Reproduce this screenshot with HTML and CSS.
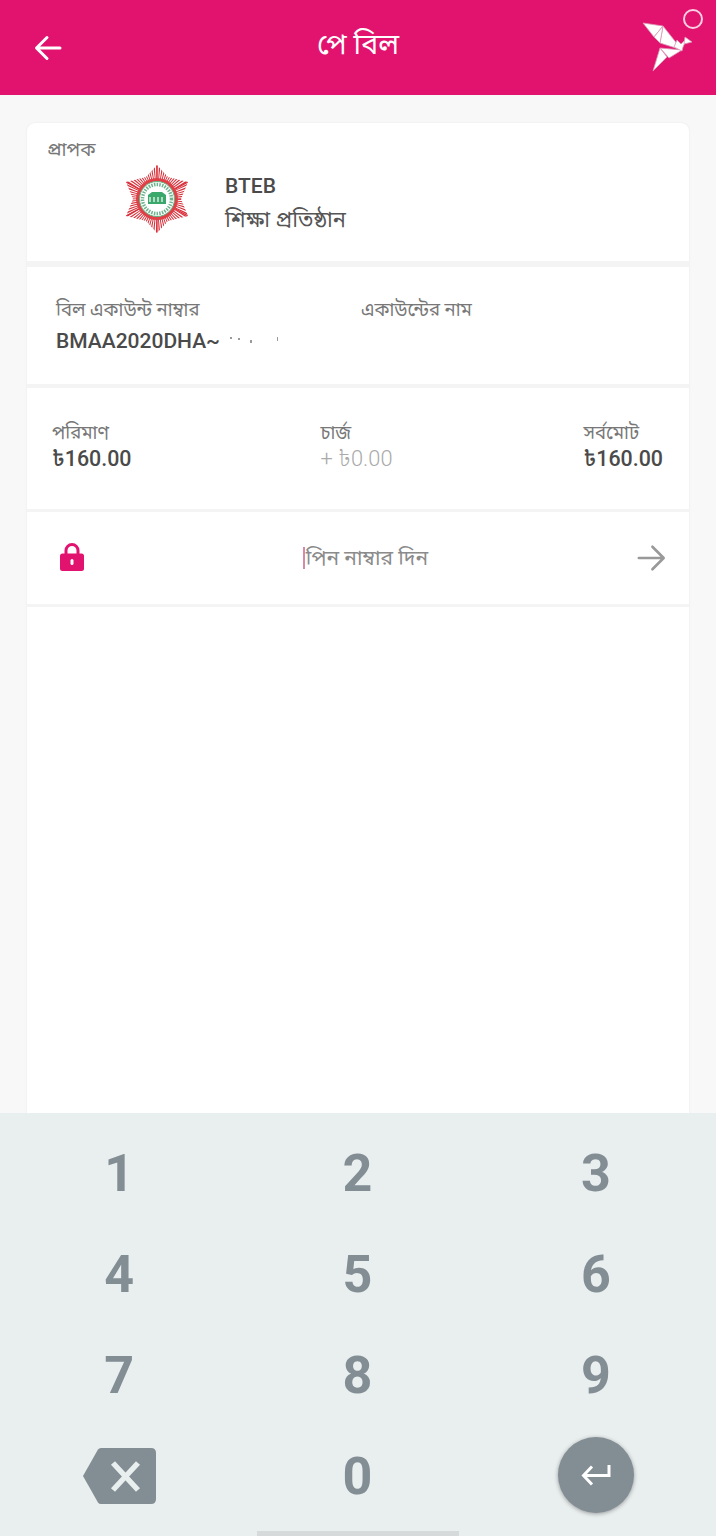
FILE: index.html
```html
<!DOCTYPE html>
<html lang="bn">
<head>
<meta charset="utf-8">
<title>পে বিল</title>
<link rel="stylesheet" href="styles.css">
</head>
<body>
<div class="screen">
  <header class="topbar">
    <svg class="back" width="32" height="32" viewBox="0 0 32 32"><path d="M28 16H5M15 5.500 4.500 16 15 26.500" fill="none" stroke="#fff" stroke-width="3" stroke-linecap="round" stroke-linejoin="round"/></svg>
    <h1 class="title">পে বিল</h1>
    <div class="brand">
      <svg width="56" height="56" viewBox="0 0 56 56">
        <g fill="#fff" stroke="#d998b5" stroke-width=".8" stroke-linejoin="round">
          <path d="M2 3 22 6 13 17Z"/>
          <path d="M22 6 41 30 19 23Z"/>
          <path d="M22 6 19 23 13 17Z"/>
          <path d="M41 30 19 28 28 38Z"/>
          <path d="M19 28 26 37 12 51Z"/>
          <path d="M36 20 40 24 46 18 42 27 41 31 33 27Z"/>
          <path d="M44 17 51 22 43 24Z"/>
        </g>
      </svg>
      <span class="ring"></span>
    </div>
  </header>

  <main class="page">
    <section class="card">
      <div class="row payee">
        <div class="small-label">প্রাপক</div>
        <div class="payee-body">
          <svg class="logo" width="66" height="68" viewBox="-33 -34 66 68">
            <defs>
              <clipPath id="star"><path d="M0-34 11-22 31-17 24 0 31 17 11 22 0 34-11 22-31 17-24 0-31-17-11-22Z"/></clipPath>
            </defs>
            <g clip-path="url(#star)">
              <circle r="30" fill="none" stroke="#d8323c" stroke-width="24" stroke-dasharray="1.300 1.300"/>
              <path d="M0-34V34M-31-17 31 17M31-17-31 17" stroke="#d8323c" stroke-width="1.200"/>
            </g>
            <circle r="21" fill="#e03f47"/>
            <circle r="17.500" fill="#fff" stroke="#5fb77f" stroke-width="1"/>
            <circle r="14.500" fill="none" stroke="#3d9a68" stroke-width="3.500" stroke-dasharray="1.500 1.200" opacity=".75"/>
            <rect x="-10" y="-8" width="20" height="14" fill="#fff"/>
            <path d="M-9-4-5-7H5L9-4V5H-9Z" fill="#3aa76b"/>
            <path d="M-7-2V3M-3-2V3M1-2V3M5-2V3" stroke="#fff" stroke-width="1.200"/>
          </svg>
          <div class="payee-text">
            <div class="payee-name">BTEB</div>
            <div class="payee-type">শিক্ষা প্রতিষ্ঠান</div>
          </div>
        </div>
      </div>
      <div class="row account">
        <div class="acc-col acc-number">
          <div class="label">বিল একাউন্ট নাম্বার</div>
          <div class="value account-value">BMAA2020DHA~<svg class="specks" width="60" height="12" viewBox="0 0 60 12"><path d="M4 2h2v2H4ZM12 3h2v2h-2ZM24 5h2v3h-2ZM51 2h1v4h-1Z" fill="#9a9a9a"/></svg></div>
        </div>
        <div class="acc-col">
          <div class="label">একাউন্টের নাম</div>
        </div>
      </div>
      <div class="row amounts">
        <div class="amt amt-left">
          <div class="label">পরিমাণ</div>
          <div class="value">৳160.00</div>
        </div>
        <div class="amt amt-mid">
          <div class="label">চার্জ</div>
          <div class="charge">+ ৳0.00</div>
        </div>
        <div class="amt amt-right">
          <div class="label">সর্বমোট</div>
          <div class="value">৳160.00</div>
        </div>
      </div>
      <div class="row pin">
        <svg class="lock" width="26" height="30" viewBox="0 0 26 30"><path d="M7 13V8.500a6 6 0 0 1 12 0V13" fill="none" stroke="#e2136e" stroke-width="3"/><rect x="1" y="11.500" width="24" height="17.500" rx="2.500" fill="#e2136e"/><rect x="11.500" y="17" width="3" height="6" rx="1.500" fill="#fff"/></svg>
        <div class="pin-field"><span class="caret"></span>পিন নাম্বার দিন</div>
        <svg class="go" width="30" height="30" viewBox="0 0 32 32"><path d="M3 16H29M17.500 4 29.500 16 17.500 28" fill="none" stroke="#999" stroke-width="2.800" stroke-linecap="round" stroke-linejoin="round"/></svg>
      </div>
      <div class="blank"></div>
    </section>
  </main>

  <section class="keypad">
    <div class="key">1</div><div class="key">2</div><div class="key">3</div>
    <div class="key">4</div><div class="key">5</div><div class="key">6</div>
    <div class="key">7</div><div class="key">8</div><div class="key">9</div>
    <div class="key">
      <svg class="backspace" width="76" height="58" viewBox="0 0 76 58"><path d="M17 2.500Q18 1 20 1H70Q75 1 75 6V52Q75 57 70 57H20Q18 57 17 55.500L2 29Z" fill="#838d94"/><path d="M32 16 57 43M57 16 32 43" stroke="#e9eeef" stroke-width="5.500"/></svg>
    </div>
    <div class="key">0</div>
    <div class="key"><div class="enter"><svg width="30" height="24" viewBox="0 0 30 24"><path d="M28 2V12.500H3M11 3.500 2.500 12.500 11 21.500" fill="none" stroke="#fff" stroke-width="3"/></svg></div></div>
    <div class="home-bar"></div>
  </section>
</div>
</body>
</html>
```

FILE: styles.css
```css
* { box-sizing: border-box; }
html, body { margin: 0; padding: 0; }
body { font-family: Roboto, "Noto Sans Bengali", "Noto Sans", "Liberation Sans", sans-serif; background: #f8f8f8; }
.screen { width: 716px; height: 1536px; display: flex; flex-direction: column; overflow: hidden; }

.topbar { flex: 0 0 95px; background: #e2136e; display: flex; align-items: center; justify-content: center; position: relative; }
.back { position: absolute; left: 32px; top: 32px; }
.title { margin: 0 0 6px; color: #fff; font-size: 28.500px; font-weight: 400; line-height: 32px; }
.brand { position: absolute; left: 640px; top: 8px; width: 76px; height: 64px; }
.brand svg { position: absolute; left: 1px; top: 12px; }
.ring { position: absolute; left: 43px; top: 1px; width: 20px; height: 20px; border: 2px solid #f9cfe2; border-radius: 50%; }

.page { flex: 1; padding: 28px 27px 0; min-height: 0; }
.card { height: 100%; background: #fff; border-radius: 8px 8px 0 0; box-shadow: 0 0 2px #e4e4e4; display: flex; flex-direction: column; color: #444; }
.row { border-bottom: 6px solid #f4f4f4; }

.payee { height: 144px; padding: 16px 20px 0; }
.small-label { font-size: 19px; line-height: 22px; color: #777; }
.payee-body { display: flex; margin-top: 4px; }
.logo { margin-left: 77px; }
.payee-text { margin-left: 35px; margin-top: 8px; }
.payee-name { font-size: 21px; line-height: 26px; font-weight: 500; color: #4a4a4a; }
.payee-type { font-size: 21.800px; line-height: 30px; margin-top: 6px; color: #555; }

.account { height: 121px; border-bottom-width: 4px; padding: 31px 29px 0; display: flex; }
.acc-col { flex: 0 0 305px; }
.label { font-size: 18.500px; line-height: 24px; color: #777; }
.value { font-size: 21.400px; line-height: 28px; font-weight: 500; color: #4a4a4a; white-space: nowrap; display: flex; align-items: center; }
.account-value { font-size: 21px; margin-top: 5px; }
.specks { margin-left: 6px; }

.amounts { height: 124px; border-bottom-width: 3px; padding: 33px 26px 0 25px; display: flex; justify-content: space-between; }
.amt-mid { position: relative; left: -1px; }
.charge { font-size: 21.800px; line-height: 28px; color: #aaa; font-weight: 300; }

.pin { height: 95px; border-bottom-width: 3px; padding: 0 23px 0 32px; display: flex; align-items: center; justify-content: space-between; }
.lock { flex: none; margin-top: -2px; }
.pin-field { display: flex; align-items: center; font-size: 21px; line-height: 28px; color: #8b8b8b; position: relative; left: 5px; }
.caret { width: 2px; height: 22px; background: #d58aa9; margin-right: 1px; }
.blank { flex: 1; }

.keypad { flex: 0 0 423px; background: #e9eeef; padding: 10px 1px 0 0; display: grid; grid-template-columns: repeat(3, 1fr); grid-auto-rows: 101px; position: relative; }
.key { display: flex; align-items: center; justify-content: center; font-size: 52px; font-weight: 700; color: #838d94; }
.backspace { margin-top: -2px; }
.enter { width: 76px; height: 76px; margin-top: -4px; border-radius: 50%; background: #838d94; box-shadow: 0 1px 4px rgba(0,0,0,.35); display: flex; align-items: center; justify-content: center; }
.home-bar { position: absolute; left: 257px; bottom: 0; width: 202px; height: 5px; background: #d6dadb; }
```
